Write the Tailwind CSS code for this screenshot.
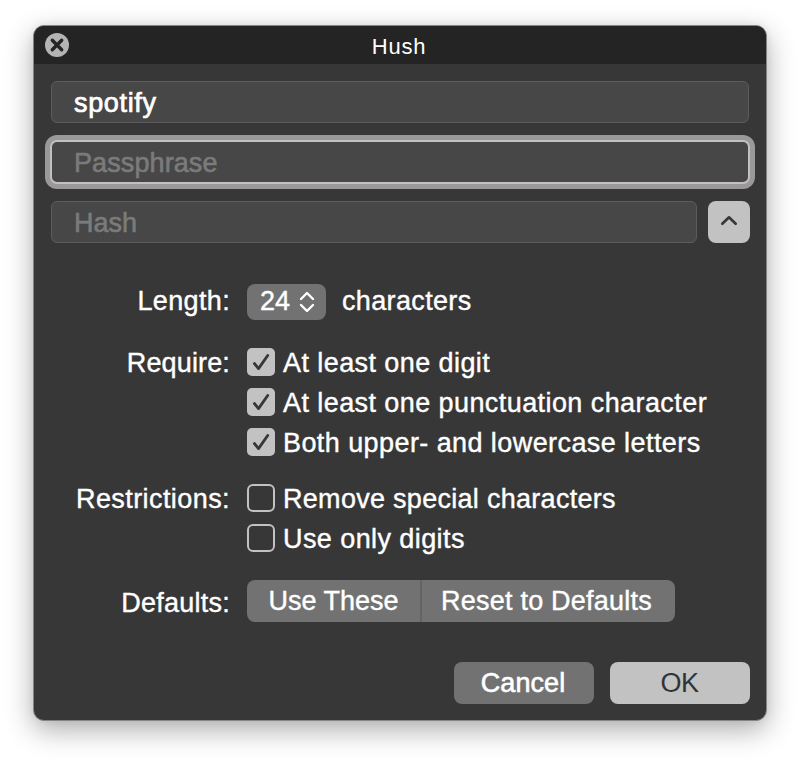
<!DOCTYPE html>
<html lang="en">
<head>
<meta charset="utf-8">
<title>Hush</title>
<script src="https://cdn.jsdelivr.net/npm/@tailwindcss/browser@4"></script>
</head>
<body class="h-[762px] w-[800px] overflow-hidden bg-white px-[33px] pt-[25px] font-['Liberation_Sans',Arial,sans-serif] text-[27px] leading-[40px] text-white">
<main class="h-[696px] w-[734px] overflow-hidden rounded-[11px] border border-[#858585] bg-[#373737] shadow-[0_9px_28px_rgba(0,0,0,0.32),0_0_8px_rgba(0,0,0,0.06)]">
  <header class="grid h-[38px] grid-cols-[60px_1fr_60px] items-center bg-[#242424]">
    <svg class="ml-[11px] size-6" viewBox="0 0 24 24" fill="none"><circle cx="12" cy="12" r="12" fill="#b4b4b4"/><path d="M7.3 7.3l9.4 9.4M16.7 7.3l-9.4 9.4" stroke="#242424" stroke-width="3.4" stroke-linecap="round"/></svg>
    <h1 class="pt-[3px] pr-[2px] text-center text-[22px] leading-[30px] tracking-[0.75px]">Hush</h1>
  </header>
  <form class="flex flex-col pt-[17px] pr-4 pl-[17px]">
    <div class="mr-px flex h-[42px] items-center rounded-[6px] border border-[#5c5c5c] bg-[#474747] pt-[2px] pl-[22px] tracking-[0.65px] [-webkit-text-stroke:0.7px_white]">spotify</div>
    <div class="mt-[17px] -ml-px flex h-[44px] items-center rounded-[7px] border-2 border-[#c2c0c1] bg-[#474747] pt-px pl-[22px] tracking-[0.1px] text-[#7b7b7b] shadow-[0_0_0_5px_#9a9899] [-webkit-text-stroke:0.6px_#7b7b7b]">Passphrase</div>
    <div class="mt-[17px] flex gap-[11px]">
      <div class="flex h-[42px] w-[646px] items-center rounded-[6px] border border-[#5c5c5c] bg-[#474747] pt-[2px] pl-[22px] text-[#7b7b7b] [-webkit-text-stroke:0.6px_#7b7b7b]">Hash</div>
      <button type="button" aria-label="Hide options" class="flex size-[42px] items-center justify-center rounded-[8px] bg-[#c2c2c2]"><svg class="size-[42px]" viewBox="0 0 42 42" fill="none"><path d="M14.3 22.8l6.7-6.5 6.7 6.5" stroke="#373737" stroke-width="2.6" stroke-linecap="round" stroke-linejoin="round"/></svg></button>
    </div>
    <div class="mt-[39px] grid grid-cols-[179px_1fr] gap-x-[17px] tracking-[0.42px] [-webkit-text-stroke:0.4px_white]">
      <div class="text-right leading-[38px] tracking-[0.35px]">Length:</div>
      <div class="flex h-[40px] items-center leading-[38px]"><div class="flex h-9 w-[79px] items-center gap-[9px] rounded-[8px] bg-[#727272] pl-[13px] tracking-normal"><span class="-mt-[2px]">24</span><svg class="h-[22px] w-4" viewBox="0 0 16 22" fill="none"><path d="M2 8l6-6 6 6M2 14l6 6 6-6" stroke="#fff" stroke-width="2.4" stroke-linecap="round" stroke-linejoin="round"/></svg></div><span class="-mt-[2px] pl-4 tracking-[0.35px]">characters</span></div>
      <div class="mt-[20px] pt-px text-right tracking-[0.15px]">Require:</div>
      <div class="mt-[20px]">
        <div class="flex h-10 items-center gap-2"><svg class="size-7" viewBox="0 0 28 28" fill="none"><rect width="28" height="28" rx="5" fill="#c2c2c2"/><path d="M7.4 15.5l4.1 5.1L20.7 7.5" stroke="#373737" stroke-width="2.8" stroke-linecap="round" stroke-linejoin="round"/></svg><span class="pt-[2px]">At least one digit</span></div>
        <div class="flex h-10 items-center gap-2"><svg class="size-7" viewBox="0 0 28 28" fill="none"><rect width="28" height="28" rx="5" fill="#c2c2c2"/><path d="M7.4 15.5l4.1 5.1L20.7 7.5" stroke="#373737" stroke-width="2.8" stroke-linecap="round" stroke-linejoin="round"/></svg><span class="pt-[2px]">At least one punctuation character</span></div>
        <div class="flex h-10 items-center gap-2"><svg class="size-7" viewBox="0 0 28 28" fill="none"><rect width="28" height="28" rx="5" fill="#c2c2c2"/><path d="M7.4 15.5l4.1 5.1L20.7 7.5" stroke="#373737" stroke-width="2.8" stroke-linecap="round" stroke-linejoin="round"/></svg><span class="pt-[2px]">Both upper- and lowercase letters</span></div>
      </div>
      <div class="mt-4 pt-px text-right">Restrictions:</div>
      <div class="mt-4">
        <div class="flex h-10 items-center gap-2"><span class="size-7 rounded-[6px] border-2 border-[#c2c2c2]"></span><span class="pt-[2px] tracking-[0.29px]">Remove special characters</span></div>
        <div class="flex h-10 items-center gap-2"><span class="size-7 rounded-[6px] border-2 border-[#c2c2c2]"></span><span class="pt-[2px]">Use only digits</span></div>
      </div>
      <div class="mt-[22px] pt-[3px] text-right tracking-[0.25px]">Defaults:</div>
      <div class="mt-[22px] flex h-[42px] w-[428px] overflow-hidden rounded-[8px] bg-[#727272]"><button type="button" class="w-[175px] border-r-2 border-[#636363] tracking-normal">Use These</button><button type="button" class="flex-1 pr-[4px] tracking-[0.22px]">Reset to Defaults</button></div>
    </div>
    <div class="mt-[39px] flex justify-end gap-4">
      <button type="button" class="h-[42px] w-[140px] rounded-[8px] bg-[#727272] pr-[2px] tracking-[0.1px] [-webkit-text-stroke:0.6px_white]">Cancel</button>
      <button type="button" class="h-[42px] w-[140px] rounded-[8px] bg-[#c2c2c2] pr-px tracking-[-0.4px] text-[#333]">OK</button>
    </div>
  </form>
</main>
</body>
</html>
